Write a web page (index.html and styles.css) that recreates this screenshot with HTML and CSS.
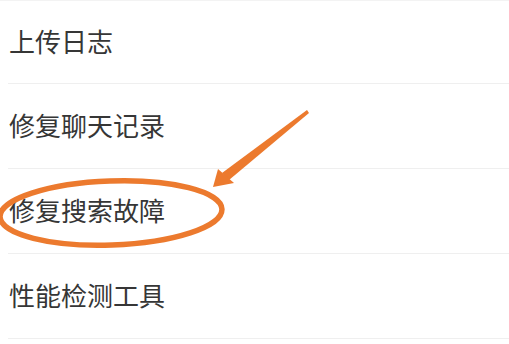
FILE: index.html
```html
<!DOCTYPE html>
<html lang="zh-CN">
<head>
<meta charset="utf-8">
<title>设置</title>
<link rel="stylesheet" href="styles.css">
</head>
<body>
<div class="page">
  <ul class="menu">
    <li class="item">上传日志</li>
    <li class="item">修复聊天记录</li>
    <li class="item">修复搜索故障</li>
    <li class="item">性能检测工具</li>
  </ul>
  <svg class="annotation" width="509" height="344" viewBox="0 0 509 344" aria-hidden="true">
    <ellipse cx="111" cy="213" rx="111" ry="32" transform="rotate(-2 111 213)" fill="none" stroke="#ec7a2e" stroke-width="5.5"/>
    <polygon points="307,110 309,113 229,180 222,173" fill="#ec7a2e"/>
    <polygon points="213,187 218,169 234,183" fill="#ec7a2e"/>
  </svg>
</div>
</body>
</html>
```
FILE: styles.css
```css
html, body {
  margin: 0;
  padding: 0;
  background: #ffffff;
}
.page {
  position: relative;
  width: 509px;
  height: 344px;
  overflow: hidden;
  font-family: "Noto Sans CJK SC", "Noto Sans", sans-serif;
}
.menu {
  list-style: none;
  margin: 0;
  padding: 0;
  border-top: 1px solid #f3f3f3;
}
.item {
  box-sizing: content-box;
  height: 81px;
  margin-left: 8px;
  padding: 0 0 3px 1px;
  display: flex;
  align-items: center;
  font-size: 26px;
  color: #363636;
  border-bottom: 1px solid #efefef;
}
.item:first-child {
  height: 79px;
}
.annotation {
  position: absolute;
  left: 0;
  top: 0;
}
```
